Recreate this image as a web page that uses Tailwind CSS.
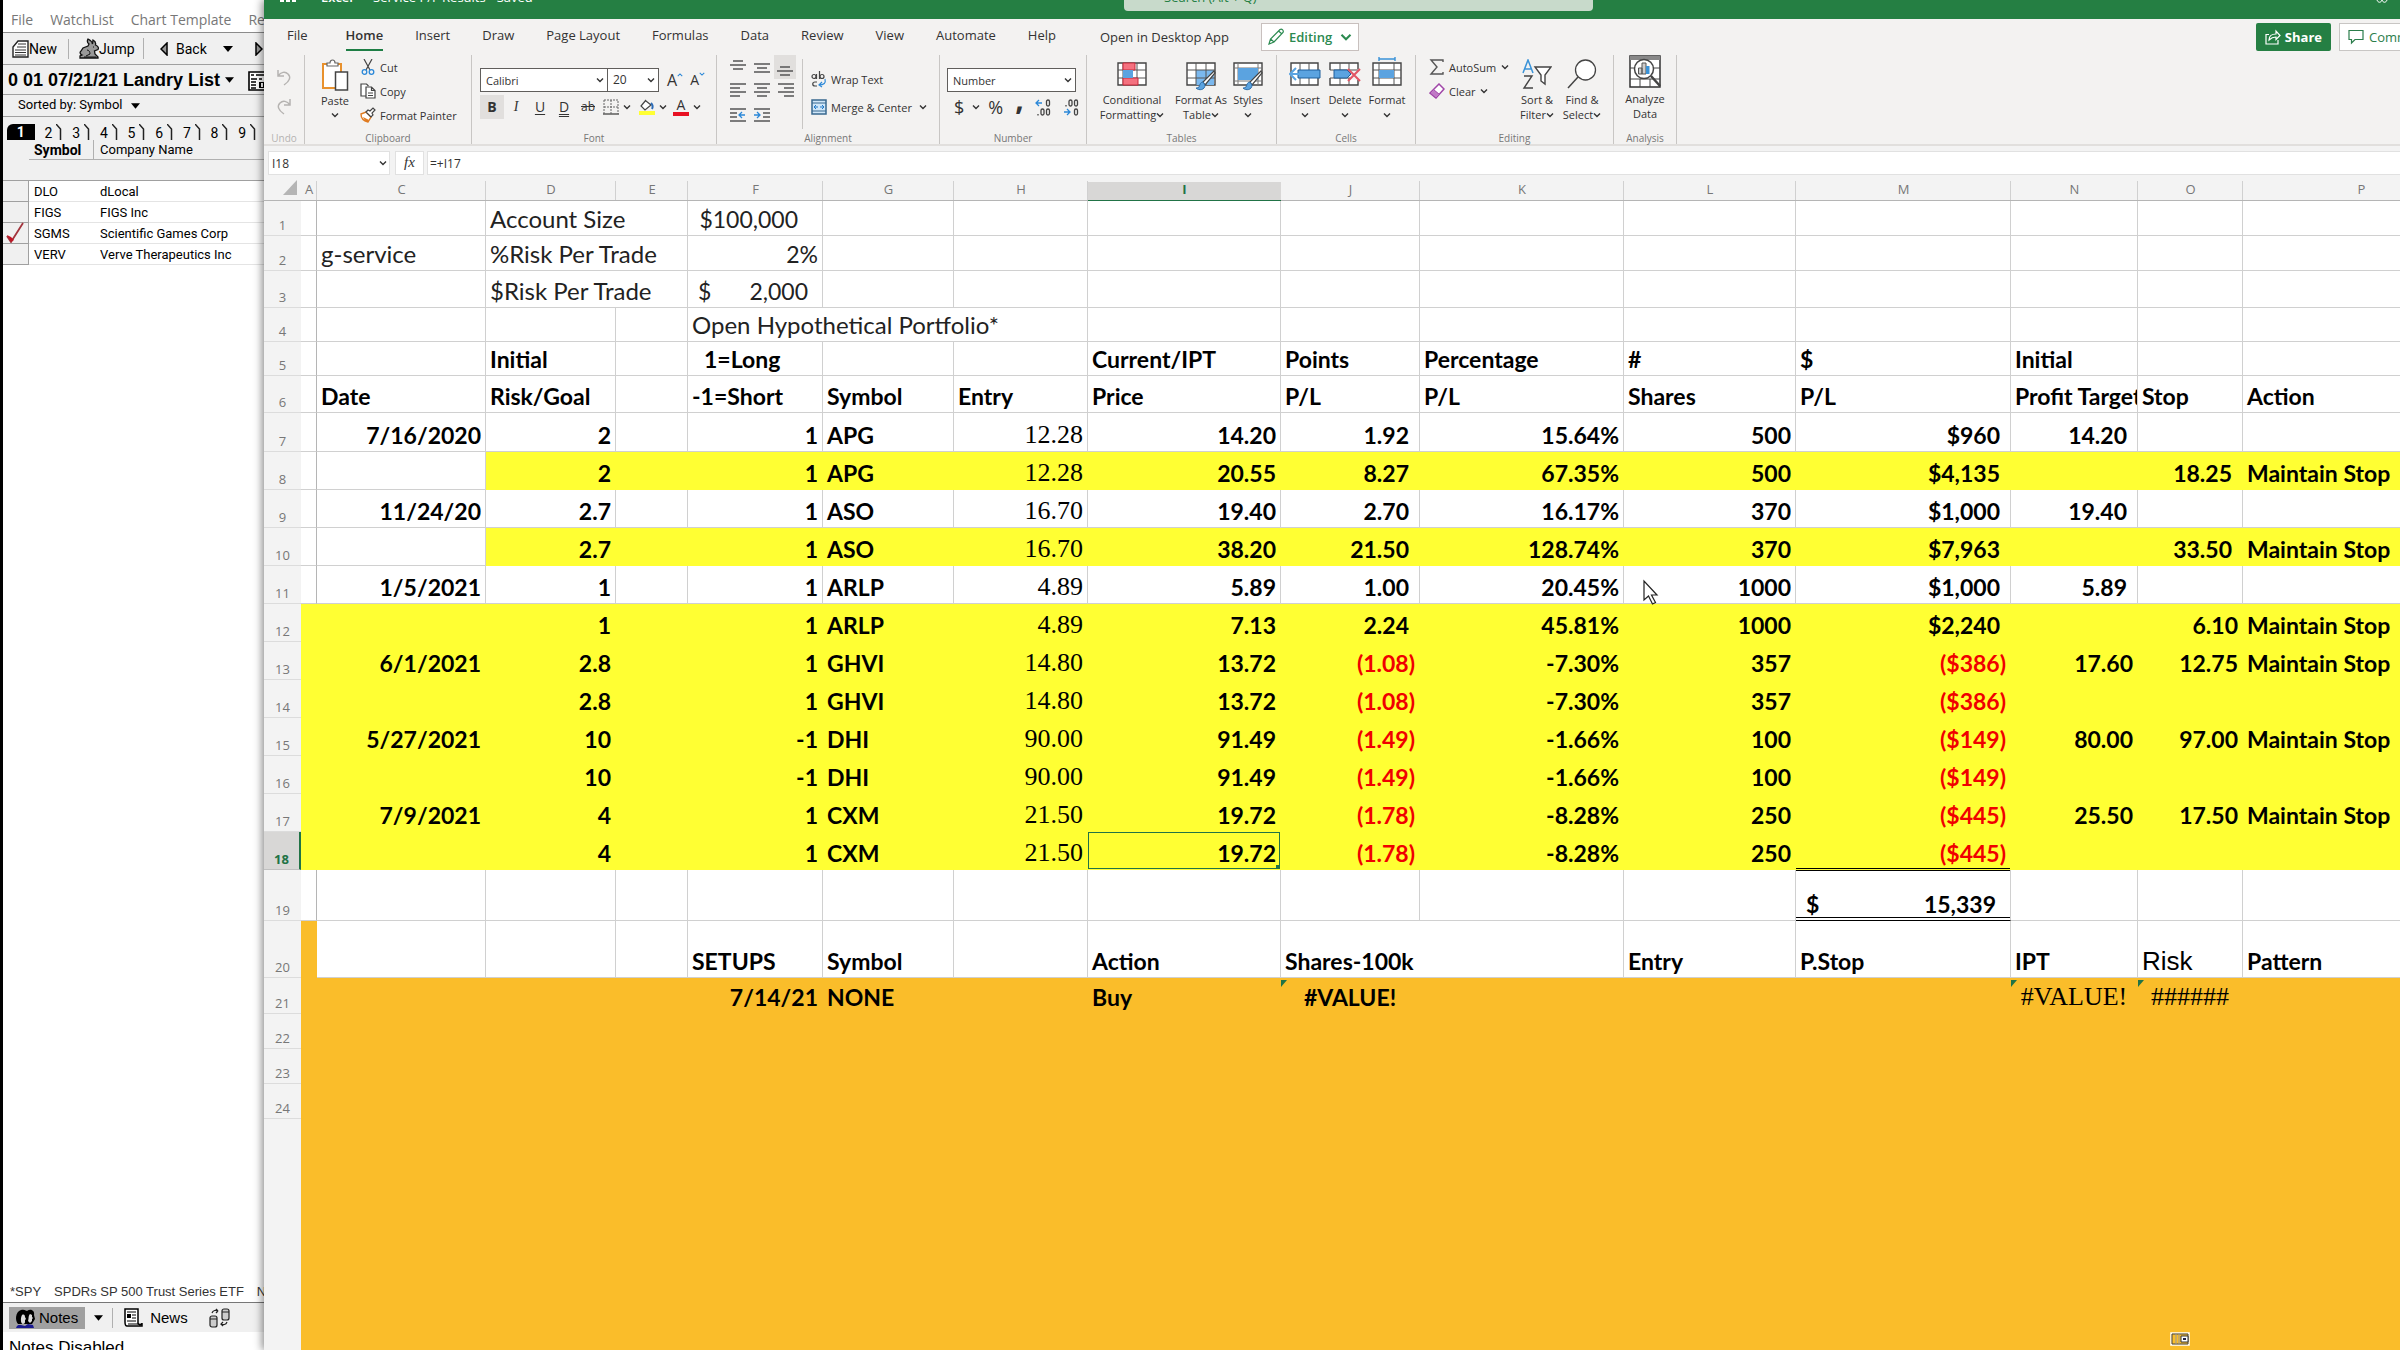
<!DOCTYPE html>
<html lang="en">
<head>
    <meta charset="UTF-8">
    <meta name="viewport" content="width=device-width, initial-scale=1.0">
    <title>Service P/F Results - Excel</title>
    <script src="https://cdn.jsdelivr.net/npm/@tailwindcss/browser@4"></script>
</head>
<body class="flex h-screen overflow-hidden bg-white font-['Open_Sans',sans-serif]">
    <!-- Shared icons -->
    <svg class="hidden">
        <symbol id="chev" viewBox="0 0 8 8"><path d="M1 2.5 4 5.5 7 2.5" fill="none" stroke="currentColor" stroke-width="1.4"/></symbol>
        <symbol id="tri" viewBox="0 0 10 6"><path d="M0 0h10L5 6z" fill="currentColor"/></symbol>
        <symbol id="brush" viewBox="0 0 22 22"><path d="M20 2 9 13l2 3L21 4z" fill="#fff" stroke="#444" stroke-width="1.2"/><path d="M9 13c-3 0-3 3-4 5-1 1-3 1-3 1 3 3 9 2 9-3z" fill="#5ba3e0" stroke="#2f6fab"/></symbol>
    </svg>

    <!-- Watch list -->
    <aside class="flex w-[264px] flex-none flex-col overflow-hidden whitespace-nowrap border-l-[3px] border-black bg-white font-['Roboto',sans-serif] text-sm text-black">
        <nav class="flex h-[33px] items-center gap-[17px] border-b border-[#8c8c8c] pt-2 pl-2 font-['Open_Sans',sans-serif] text-sm leading-5 text-[#777]">
            <a href="#">File</a>
            <a href="#">WatchList</a>
            <a href="#">Chart Template</a>
            <a href="#">Reports</a>
        </nav>
        <div class="flex h-8 items-center border-b border-[#a0a0a0] bg-[#f0f0f0]">
            <button class="flex w-[66px] items-center border-r border-[#b0b0b0] pl-[9px]">
                <svg class="h-[18px] w-[17px]" viewBox="0 0 17 18"><path d="M6 1h10v16H1V7z" fill="#fff" stroke="#222" stroke-width="1.4"/><path d="M6 4h8M5 7h9M3 10h11M3 12.500h11M3 15h11" stroke="#333"/></svg>
                New
            </button>
            <button class="flex w-[75px] items-center border-r border-[#b0b0b0] pl-[10px]">
                <svg class="h-[21px] w-5" viewBox="0 0 20 21"><path d="M9 1c2 1 4 3 4.500 5L14 2c2 1 3 3 2.500 5 2.500 1 3.500 3 2.500 4.500L15.500 13l.5 3 3 3v1H1v-2l2-1c-2-1-2.500-3-1-4l2-3 5-2 1-2C8.500 5 8 3 9 1z" fill="#999" stroke="#111" stroke-width="1.300"/><path d="M8 12c2 0 3 2 3 4l-4 2M14 9h1M5 19h12" stroke="#111" fill="none"/></svg>
                Jump
            </button>
            <button class="flex items-center gap-2 pl-4">
                <svg class="h-[14px] w-2" viewBox="0 0 8 14"><path d="M7 1v12L1 7z" fill="#999" stroke="#000" stroke-width="1.500"/></svg>
                Back
                <svg class="ml-2 h-[6px] w-[10px]"><use href="#tri"/></svg>
            </button>
            <button class="pl-[22px]" aria-label="Forward">
                <svg class="h-[14px] w-2" viewBox="0 0 8 14"><path d="M1 1v12l6-6z" fill="#999" stroke="#000" stroke-width="1.500"/></svg>
            </button>
        </div>
        <div class="flex h-[30px] items-center border-b border-[#a0a0a0] bg-[#f0f0f0] pt-[2px] pl-[5px] font-['Liberation_Sans',sans-serif] text-[18px] font-bold">
            <button class="flex items-center gap-[5px]">0 01 07/21/21 Landry List <svg class="h-[6px] w-[9px]"><use href="#tri"/></svg></button>
            <svg class="ml-[14px] h-5 w-6 flex-none" viewBox="0 0 24 20"><path d="M1 1h26v18H1z" fill="#fff" stroke="#000" stroke-width="1.600"/><path d="M3 4h3M8 4h16M3 8h6M3 11h5M3 14h5M3 17h5M11 8h3M17 8h6" stroke="#000" stroke-width="1.500"/><path d="M11 11h8v6h-8z"/><path d="M13 12h2v4h-2z" fill="#fff"/></svg>
        </div>
        <button class="flex h-[22px] items-center gap-[9px] border-b border-[#a0a0a0] bg-[#f0f0f0] pl-[15px] text-[13px]">Sorted by: Symbol <svg class="h-[6px] w-[9px]"><use href="#tri"/></svg></button>
        <div class="flex h-[23px] items-end bg-[#f0f0f0] pr-[8px] pl-1" id="pages"></div>
        <table class="w-full table-fixed border-separate border-spacing-0 text-left text-[13px] leading-[18px]">
            <colgroup><col class="w-[26px]"><col class="w-[65px]"><col></colgroup>
            <thead class="bg-[#f0f0f0]">
                <tr>
                    <td></td>
                    <th class="border-r border-b border-[#b0b0b0] pt-px pl-[5px] text-sm leading-[18px] font-bold">Symbol</th>
                    <th class="border-b border-[#b0b0b0] pt-px pl-[6px] font-normal">Company Name</th>
                </tr>
                <tr><td colspan="3" class="h-[21px] border-b border-[#a0a0a0]"></td></tr>
            </thead>
            <tbody id="watch"></tbody>
        </table>

        <div class="mt-auto flex gap-[13px] pb-[1px] pl-[7px] font-['Liberation_Sans',sans-serif] text-[13px] leading-[18px] text-[#333]">
            <span>*SPY</span><span>SPDRs SP 500 Trust Series ETF</span><span>None</span>
        </div>
        <div class="flex h-[30px] items-center border-t border-[#777] bg-[#f0f0f0] pl-[6px] font-['Liberation_Sans',sans-serif] text-[15px]">
            <button class="flex h-[22px] items-center gap-1 bg-[#a0a0a0] pr-[7px] pl-[6px]">
                <svg class="h-5 w-5" viewBox="0 0 20 20"><path d="M3 16c-3-3-3-12 3-14 4-1 5 1 6 1 4-3 8 0 7 4l1 4-3 5H4z"/><path d="M7 7c2-1 3 0 3 2l1 2-1 1v2c0 1-1 2-2 2-2 0-3-5-1-9zM15 6l2 1v2l1 1-1 1v2l-2 2-2-2c1-2 0-5 2-7z" fill="#ddd"/><path d="M1 20c1-4 4-3 5-3l4 1 3-2 5 1 1 3z" fill="#1a1a90"/></svg>
                Notes
            </button>
            <button class="px-[9px]" aria-label="Notes menu"><svg class="h-[6px] w-[9px]"><use href="#tri"/></svg></button>
            <button class="flex h-5 items-center gap-[7px] border-l border-[#b0b0b0] pl-[11px]">
                <svg class="h-[19px] w-[19px]" viewBox="0 0 19 19"><path d="M1 1h13v14c0 2 4 2 4 0v3H3c-2 0-2-3-2-4z" fill="#fff" stroke="#000" stroke-width="1.500"/><path d="M3 4h9M8 7h4M8 10h4M3 13h9M4 16h10" stroke="#000"/><path d="M3 6h4v4H3z"/></svg>
                News
            </button>
            <svg class="ml-[21px] h-5 w-[22px]" viewBox="0 0 22 20" fill="#ccc" stroke="#222" stroke-width="1.200"><rect x="13" y="1" width="7" height="11" rx="2"/><rect x="1" y="8" width="7" height="11" rx="2"/><path d="M13 4h7M1 11h7M3 5c1-3 4-3 6-2l-2-2m2 2L7 5M18 14c-1 3-4 3-6 2l2-2m-2 2 2 2" fill="none"/></svg>
        </div>
        <div class="h-[18px] pt-1 pl-[6px] font-['Liberation_Sans',sans-serif] text-[17px] leading-6">Notes Disabled</div>
    </aside>

    <!-- Excel window -->
    <main class="relative flex min-w-0 flex-1 flex-col bg-[#f3f2f1] text-[#333] shadow-[-2px_0_8px_rgba(0,0,0,0.45)]">
        <header class="relative flex h-[19px] flex-none gap-5 overflow-hidden bg-[#257f43] pl-4 text-[13px] leading-4 text-white">
            <svg class="h-[2px] w-[17px]" viewBox="0 0 17 2" fill="#fff"><path d="M0 0h4v2H0zM6 0h4v2H6zM12 0h4v2h-4z"/></svg>
            <span class="-mt-[11px] ml-1 font-semibold">Excel</span>
            <span class="-mt-[11px]">Service P/F Results - Saved</span>
            <label class="absolute top-0 left-1/2 -ml-[208px] flex h-[11px] w-[469px] items-start overflow-hidden rounded-b-sm bg-[#c8dacb] pl-10 text-[#257f43]">
                <span class="-mt-[11px]">Search (Alt + Q)</span>
                <input type="text" class="w-0" aria-label="Search">
            </label>
            <svg class="mr-3 ml-auto h-[3px] w-3" viewBox="0 0 12 3"><path d="M1 0c1 3 4 3 5 0 1 3 4 3 5 0" fill="none" stroke="#fff"/></svg>
        </header>

        <nav class="flex h-[33px] flex-none items-center pb-[2px] pl-[7px] text-[13px] leading-5 whitespace-nowrap">
            <a href="#" class="mr-[22px] px-4">File</a>
            <a href="#" class="relative flex h-8 items-center font-semibold">Home<span class="absolute inset-x-0 bottom-0 h-[2px] bg-[#1e7e45]"></span></a>
            <a href="#" class="ml-4 px-4">Insert</a>
            <a href="#" class="px-4">Draw</a>
            <a href="#" class="px-4">Page Layout</a>
            <a href="#" class="px-4">Formulas</a>
            <a href="#" class="px-4">Data</a>
            <a href="#" class="px-4">Review</a>
            <a href="#" class="px-4">View</a>
            <a href="#" class="px-4">Automate</a>
            <a href="#" class="px-4">Help</a>
            <a href="#" class="ml-7 pt-1">Open in Desktop App</a>
            <button class="mt-1 ml-8 flex h-7 items-center gap-1 border border-[#c8c0be] bg-white px-[6px] font-semibold text-[#2b8a50]">
                <svg class="h-[17px] w-[17px]" viewBox="0 0 17 17" fill="none" stroke="currentColor" stroke-width="1.200"><path d="M1 16l1.500-5L12 1.500c2-1 4 1 3 3L6 14zM2.500 11 6 14M10.500 3l3.500 3"/></svg>
                Editing
                <svg class="ml-1 h-3 w-3"><use href="#chev"/></svg>
            </button>
            <button class="mt-1 mr-2 ml-auto flex h-7 items-center gap-1 rounded-xs bg-[#257f43] px-[9px] font-bold text-white">
                <svg class="h-4 w-4" viewBox="0 0 16 16" fill="none" stroke="currentColor" stroke-width="1.200"><path d="M4 5.500H1V15h12v-4M4 11c0-4 3-6 7-6V2l4 4.500-4 4V8C8 8 6 9 4 11z"/></svg>
                Share
            </button>
            <button class="mt-1 flex h-7 w-[61px] items-center gap-[5px] overflow-hidden border border-r-0 border-[#c8c6c4] bg-white pl-2 text-[#2b7d4b]">
                <svg class="h-4 w-4 flex-none" viewBox="0 0 16 16" fill="none" stroke="currentColor" stroke-width="1.200"><path d="M1 1.500h14v9H7L3.500 14v-3.500H1z"/></svg>
                Comments
            </button>
        </nav>

        <!-- Ribbon -->
        <div class="flex h-[94px] flex-none border-b-2 border-[#e1dfdd] pt-[3px] text-[11px] leading-[15px] whitespace-nowrap">
            <section class="flex w-[41px] flex-none flex-col items-center border-r border-[#c8c6c4] text-[#b5b3b1]">
                <button class="mt-3 h-5" aria-label="Undo"><svg class="h-[18px] w-4" viewBox="0 0 16 18" fill="none" stroke="currentColor" stroke-width="1.500"><path d="M2 2v6h6M2 8c3-4 7-5 10-2s2 7-4 11"/></svg></button>
                <button class="mt-[9px] h-5" aria-label="Redo"><svg class="h-[18px] w-4" viewBox="0 0 16 18" fill="none" stroke="currentColor" stroke-width="1.500"><path d="M14 2v6H8M14 8c-3-4-7-5-10-2s-2 7 4 11"/></svg></button>
                <h2 class="mt-auto text-[10px] leading-[11px]">Undo</h2>
            </section>

            <section class="flex w-[167px] flex-none flex-col border-r border-[#c8c6c4]">
                <div class="flex items-start gap-[11px] pl-4">
                    <button class="flex w-[28px] flex-col items-center pt-1">
                        <svg class="h-8 w-7" viewBox="0 0 28 32"><path d="M2 5h18v24H2z" fill="#fff" stroke="#e8912d" stroke-width="2"/><path d="M6 7V4h3c0-4 5-4 5 0h3v3z" fill="#fff" stroke="#666" stroke-width="1.200"/><path d="M14.500 13h12v18h-12z" fill="#fff" stroke="#444" stroke-width="1.500"/></svg>
                        <span class="mt-[2px]">Paste</span>
                        <svg class="mt-[3px] h-2 w-2"><use href="#chev"/></svg>
                    </button>
                    <div class="flex flex-col gap-2 pt-1">
                        <button class="flex h-4 items-center gap-1"><svg class="h-4 w-4" viewBox="0 0 16 16" fill="none"><path d="M4 0l6 11M12 0 6 11" stroke="#444" stroke-width="1.200"/><circle cx="4.500" cy="13" r="2.300" stroke="#2b88d8" stroke-width="1.300"/><circle cx="11.500" cy="13" r="2.300" stroke="#2b88d8" stroke-width="1.300"/></svg>Cut</button>
                        <button class="flex h-4 items-center gap-1"><svg class="h-4 w-4" viewBox="0 0 16 16" fill="#fff" stroke="#444" stroke-width="1.200"><path d="M7 13H1V1h5.500l2 2"/><path d="M6 4h5.500L15 7.500V15H6zM11.500 4v3.500H15M8 10h5M8 12.500h5"/></svg>Copy</button>
                        <button class="flex h-4 items-center gap-1"><svg class="h-4 w-4" viewBox="0 0 16 16"><path d="M1 7l5-2 5 5-3 5C4 14 1 11 1 7z" fill="#fff" stroke="#e07b20" stroke-width="1.400"/><path d="M3 10l6 3-1 2c-2 0-4-2-5-5z" fill="#e07b20"/><path d="M6 5l2-2 2 1 3-3 2 2-3 3 1 2-2 2z" fill="#fff" stroke="#444" stroke-width="1.200"/></svg>Format Painter</button>
                    </div>
                </div>
                <h2 class="mt-auto text-center text-[10px] leading-[11px] text-[#777]">Clipboard</h2>
            </section>

            <section class="flex w-[245px] flex-none flex-col border-r border-[#c8c6c4]">
                <div class="mt-[13px] flex items-center pl-2">
                    <select class="h-6 w-[128px] appearance-none border border-[#605e5c] bg-white pl-[5px]" aria-label="Font"><option>Calibri</option></select>
                    <svg class="-ml-3 h-2 w-2"><use href="#chev"/></svg>
                    <select class="ml-[3px] h-6 w-[52px] appearance-none border border-[#605e5c] bg-white pl-[5px] text-xs" aria-label="Font size"><option>20</option></select>
                    <svg class="-ml-3 h-2 w-2"><use href="#chev"/></svg>
                    <button class="ml-3 flex text-base leading-5" aria-label="Increase font size">A<svg class="mt-[2px] h-[6px] w-[6px] rotate-180 text-[#2b88d8]"><use href="#chev"/></svg></button>
                    <button class="ml-[7px] flex text-sm leading-5" aria-label="Decrease font size">A<svg class="mt-[1px] h-[6px] w-[6px] text-[#2b88d8]"><use href="#chev"/></svg></button>
                </div>
                <div class="mt-[3px] flex h-6 items-center pl-2 text-sm">
                    <button class="h-6 w-6 bg-[#e1dfdd] font-bold">B</button>
                    <button class="w-6 font-['Liberation_Serif',serif] italic">I</button>
                    <button class="w-6 underline underline-offset-2">U</button>
                    <button class="w-6 underline decoration-double underline-offset-2">D</button>
                    <button class="w-6 text-xs line-through">ab</button>
                    <button class="flex items-center gap-1" aria-label="Borders"><svg class="ml-[3px] h-4 w-4" viewBox="0 0 16 16" fill="none" stroke="#666"><path d="M1 1h14v14M1 1v14M8 1v14M1 8h14" stroke-dasharray="2 1"/><path d="M0 15h16" stroke-width="1.600"/></svg><svg class="h-2 w-2"><use href="#chev"/></svg></button>
                    <button class="ml-2 flex items-center gap-1" aria-label="Fill color"><svg class="h-4 w-4" viewBox="0 0 16 16"><path d="M7 1 2 7l4 4 6-5-5-4" fill="#fff" stroke="#444" stroke-width="1.200"/><path d="M12 4c2 2 2 4 1 6" stroke="#2b6cb8" stroke-width="2" fill="none"/><path d="M0 12h16v4H0z" fill="#ff3"/></svg><svg class="h-2 w-2"><use href="#chev"/></svg></button>
                    <button class="ml-[6px] flex items-center gap-1" aria-label="Font color"><span class="flex h-[18px] w-4 items-center justify-center border-b-4 border-[#e81123] text-sm leading-4">A</span><svg class="h-2 w-2"><use href="#chev"/></svg></button>
                </div>
                <h2 class="mt-auto text-center text-[10px] leading-[11px] text-[#777]">Font</h2>
            </section>

            <section class="flex w-[223px] flex-none flex-col border-r border-[#c8c6c4]">
                <div class="flex">
                    <div class="grid grid-cols-3 pl-[9px]" id="aligns"></div>
                    <div class="mt-1 ml-[4px] flex h-[70px] flex-col gap-3 border-l border-[#c8c6c4] pt-3 pl-2">
                        <button class="flex h-4 items-center gap-1"><svg class="h-[17px] w-4" viewBox="0 0 16 17" fill="none" stroke="#444" stroke-width="1.200"><circle cx="3" cy="5.500" r="2"/><path d="M5.500 3v5M8.500 0v8"/><circle cx="11" cy="5.500" r="2"/><path d="M6 11H4c-3 0-3 4 0 4h2"/><path d="M14 8c1 4-1 6-6 6m3-3-3 3 3 2" stroke="#2b88d8"/></svg>Wrap Text</button>
                        <button class="flex h-4 items-center gap-1"><svg class="h-4 w-4" viewBox="0 0 16 16" fill="none"><path d="M1 1h14v14H1z" fill="#cfe6f8" stroke="#39688f" stroke-width="1.500"/><path d="M1 4h14M1 12h14" stroke="#39688f"/><path d="M3 8h4M5 6 3 8l2 2M13 8H9m2-2 2 2-2 2" stroke="#1f78c8"/></svg>Merge &amp; Center <svg class="ml-[3px] h-2 w-2"><use href="#chev"/></svg></button>
                    </div>
                </div>
                <h2 class="mt-auto text-center text-[10px] leading-[11px] text-[#777]">Alignment</h2>
            </section>

            <section class="flex w-[147px] flex-none flex-col border-r border-[#c8c6c4]">
                <div class="mt-[13px] flex items-center pl-[7px]">
                    <select class="h-6 w-[129px] appearance-none border border-[#605e5c] bg-white pl-[5px]" aria-label="Number format"><option>Number</option></select>
                    <svg class="-ml-3 h-2 w-2"><use href="#chev"/></svg>
                </div>
                <div class="mt-[3px] flex h-6 items-center gap-3 pl-[14px] text-lg">
                    <button class="flex items-center gap-2" aria-label="Currency">$<svg class="h-2 w-2"><use href="#chev"/></svg></button>
                    <button class="-ml-1">%</button>
                    <button class="w-2 pb-4 text-3xl leading-6 font-bold">,</button>
                    <button aria-label="Increase decimal"><svg class="h-[17px] w-4" viewBox="0 0 16 17" fill="none" stroke="#444" stroke-width="1.300"><path d="M7 4H1m3-3L1 4l3 3" stroke="#2b88d8"/><rect x="11.500" y="1" width="3" height="6" rx="1.500"/><rect x="6" y="10" width="3" height="6" rx="1.500"/><rect x="11.500" y="10" width="3" height="6" rx="1.500"/><path d="M3 15v1.500"/></svg></button>
                    <button aria-label="Decrease decimal"><svg class="h-[17px] w-4" viewBox="0 0 16 17" fill="none" stroke="#444" stroke-width="1.300"><path d="M1 13h6m-3-3 3 3-3 3" stroke="#2b88d8"/><rect x="6" y="1" width="3" height="6" rx="1.500"/><rect x="11.500" y="1" width="3" height="6" rx="1.500"/><rect x="11.500" y="10" width="3" height="6" rx="1.500"/><path d="M3 6v1.500"/></svg></button>
                </div>
                <h2 class="mt-auto text-center text-[10px] leading-[11px] text-[#777]">Number</h2>
            </section>

            <section class="flex w-[190px] flex-none flex-col border-r border-[#c8c6c4]">
                <div class="flex gap-[9px] pt-[7px] pl-[12px]">
                    <button class="flex w-[66px] flex-col items-center">
                        <svg class="mb-[6px] h-6 w-[30px]" viewBox="0 0 30 24"><path d="M1 1h28v22H1z" fill="#fff" stroke="#444" stroke-width="1.400"/><path d="M1 8h28M1 16h28M6 1v22M20 1v22" stroke="#555"/><path d="M6 1h12v7H6zM6 16h15v7H6z" fill="#f4717f" stroke="#c8283a"/><path d="M6 8h10v8H6z" fill="#5ba3e0"/></svg>
                        Conditional
                        <span class="flex items-center">Formatting<svg class="h-2 w-2"><use href="#chev"/></svg></span>
                    </button>
                    <button class="flex w-[54px] flex-col items-center">
                        <svg class="mb-[6px] h-6 w-[30px] overflow-visible" viewBox="0 0 30 24"><path d="M1 1h28v22H1z" fill="#fff" stroke="#444" stroke-width="1.400"/><path d="M10 8h18v15H10z" fill="#7ab8ee"/><path d="M1 8h28M1 16h28M10 1v22M20 1v22" stroke="#555"/><use href="#brush" x="8" y="7" width="22" height="22"/></svg>
                        Format As
                        <span class="flex items-center">Table<svg class="h-2 w-2"><use href="#chev"/></svg></span>
                    </button>
                    <button class="-ml-[4px] flex w-[30px] flex-col items-center">
                        <svg class="mb-[6px] h-6 w-[30px] overflow-visible" viewBox="0 0 30 24"><path d="M1 1h28v22H1z" fill="#fff" stroke="#444" stroke-width="1.400"/><path d="M1 6h28M1 19h28M5 1v22M25 1v22" stroke="#777"/><path d="M5 6h20v12H5z" fill="#5ba3e0"/><use href="#brush" x="8" y="7" width="22" height="22"/></svg>
                        Styles
                        <svg class="mt-1 h-2 w-2"><use href="#chev"/></svg>
                    </button>
                </div>
                <h2 class="mt-auto text-center text-[10px] leading-[11px] text-[#777]">Tables</h2>
            </section>

            <section class="flex w-[139px] flex-none flex-col border-r border-[#c8c6c4]">
                <div class="flex gap-[6px] pt-[7px] pl-[11px]">
                    <button class="flex w-[34px] flex-col items-center">
                        <svg class="mb-[6px] h-6 w-8" viewBox="0 0 32 24"><path d="M2 1h27v22H2z" fill="#fff" stroke="#444" stroke-width="1.400"/><path d="M11 1v22M20 1v22" stroke="#555"/><path d="M9 8h22v8H9z" fill="#5ba3e0" stroke="#1f5f9b"/><path d="M14 12H1m6-6-6 6 6 6" fill="none" stroke="#5ba3e0" stroke-width="2"/></svg>
                        Insert
                        <svg class="mt-1 h-2 w-2"><use href="#chev"/></svg>
                    </button>
                    <button class="flex w-[34px] flex-col items-center">
                        <svg class="mb-[6px] h-6 w-8" viewBox="0 0 32 24"><path d="M1 8V1h28v6M1 16v7h28v-5" fill="#fff" stroke="#444" stroke-width="1.400"/><path d="M1 8h28M1 16h20M11 1v7M20 1v7M11 16v7M20 16v7" stroke="#555"/><path d="M5 8h13l4 4-4 4H5z" fill="#5ba3e0" stroke="#1f5f9b"/><path d="M19 7l12 12M31 7 19 19" stroke="#e25563" stroke-width="2"/></svg>
                        Delete
                        <svg class="mt-1 h-2 w-2"><use href="#chev"/></svg>
                    </button>
                    <button class="flex w-[38px] flex-col items-center">
                        <svg class="mb-[6px] h-6 w-[30px] overflow-visible" viewBox="0 0 30 24"><path d="M7-3h16M7-5v4M23-5v4" stroke="#3a93d8" stroke-width="1.400"/><path d="M1 1h28v22H1z" fill="#fff" stroke="#444" stroke-width="1.400"/><path d="M1 8h28M1 16h28M7 1v22M22 1v22" stroke="#555"/><path d="M7 8h15v8H7z" fill="#5ba3e0"/></svg>
                        Format
                        <svg class="mt-1 h-2 w-2"><use href="#chev"/></svg>
                    </button>
                </div>
                <h2 class="mt-auto text-center text-[10px] leading-[11px] text-[#777]">Cells</h2>
            </section>

            <section class="flex w-[198px] flex-none flex-col border-r border-[#c8c6c4]">
                <div class="flex items-start pl-[13px]">
                    <div class="flex w-[84px] flex-col gap-2 pt-1">
                        <button class="flex h-4 items-center gap-1"><svg class="h-4 w-4" viewBox="0 0 16 16"><path d="M14 3V1H2l6 7-6 7h12v-2" fill="none" stroke="#555" stroke-width="1.400"/></svg>AutoSum <svg class="ml-[1px] h-2 w-2"><use href="#chev"/></svg></button>
                        <button class="flex h-4 items-center gap-1"><svg class="h-4 w-4" viewBox="0 0 16 16"><path d="M10 1l5 5-8 9-6-5z" fill="#fff" stroke="#a046a8" stroke-width="1.500"/><path d="M4.500 6.500l6 5L7 15l-6-5z" fill="#c07ac6" stroke="#a046a8"/></svg>Clear <svg class="h-2 w-2"><use href="#chev"/></svg></button>
                    </div>
                    <button class="flex w-[48px] flex-col items-center pt-1">
                        <svg class="mb-[3px] h-[30px] w-[30px]" viewBox="0 0 30 30" fill="none"><path d="M1 14 6 1l5 13M3 10h6" stroke="#3a93d8" stroke-width="1.500"/><path d="M2 17h8L2 29h9" stroke="#444" stroke-width="1.400"/><path d="M13 8h16l-6 8v9l-4-3v-6z" fill="#fff" stroke="#444" stroke-width="1.400"/></svg>
                        Sort &amp;
                        <span class="flex items-center">Filter<svg class="h-2 w-2"><use href="#chev"/></svg></span>
                    </button>
                    <button class="flex w-[42px] flex-col items-center pt-1">
                        <svg class="mb-[3px] h-[30px] w-[30px]" viewBox="0 0 30 30"><circle cx="18.500" cy="11" r="10" fill="#fff" stroke="#444" stroke-width="1.300"/><path d="M11 18 1 29" stroke="#444" stroke-width="1.500"/></svg>
                        Find &amp;
                        <span class="flex items-center">Select<svg class="h-2 w-2"><use href="#chev"/></svg></span>
                    </button>
                </div>
                <h2 class="mt-auto text-center text-[10px] leading-[11px] text-[#777]">Editing</h2>
            </section>

            <section class="flex w-[63px] flex-none flex-col items-center border-r border-[#c8c6c4]">
                <button class="flex flex-col items-center leading-[15px]">
                    <svg class="mb-[3px] h-[33px] w-8" viewBox="0 0 32 33"><path d="M1 1h30v31H1z" fill="#fff" stroke="#333" stroke-width="1.500"/><path d="M1 1h30v4H1z" fill="#888"/><path d="M1 13h30M1 24h30M11 24v8M21 24v8" stroke="#444"/><circle cx="15" cy="14" r="9.500" fill="#fff" stroke="#444" stroke-width="1.500"/><path d="M22 21l9 10" stroke="#444" stroke-width="2.500"/><path d="M9.500 13h3.500v6H9.500zM13 8h4v11h-4z" fill="#ccc" stroke="#555"/><path d="M17 11h3.500v8H17z" fill="#3a93d8"/></svg>
                    Analyze
                    <span>Data</span>
                </button>
                <h2 class="mt-auto text-[10px] leading-[11px] text-[#777]">Analysis</h2>
            </section>
        </div>

        <!-- Formula bar -->
        <div class="flex h-[29px] flex-none items-end gap-[5px] bg-[#f3f3f3] pl-1 text-xs">
            <div class="flex w-[122px] items-center border border-[#e1e1e1] bg-white pr-[2px]">
                <input type="text" value="I18" aria-label="Name box" class="h-[22px] w-full px-[3px]">
                <svg class="h-2 w-2 flex-none"><use href="#chev"/></svg>
            </div>
            <button class="h-6 w-[29px] border border-[#e1e1e1] bg-white font-['Liberation_Serif',serif] text-[15px] italic">fx</button>
            <input type="text" value="=+I17" aria-label="Formula" class="-ml-[2px] h-6 min-w-0 flex-1 border border-r-0 border-[#e1e1e1] bg-white px-[2px]">
        </div>

        <!-- Sheet -->
        <div class="relative flex-1 overflow-hidden bg-[#f3f3f3] bg-[linear-gradient(to_right,#f3f3f3_37px,#fabd2a_37px)]">
            <table class="w-full table-fixed border-separate border-spacing-0 font-['Lato',sans-serif] text-[23px] leading-7 whitespace-nowrap text-black">
                <colgroup>
                    <col class="w-[37px]"><col class="w-[16px]"><col class="w-[169px]"><col class="w-[130px]">
                    <col class="w-[72px]"><col class="w-[135px]"><col class="w-[131px]"><col class="w-[134px]">
                    <col class="w-[193px]"><col class="w-[139px]"><col class="w-[204px]"><col class="w-[172px]">
                    <col class="w-[215px]"><col class="w-[127px]"><col class="w-[105px]"><col class="w-[237px]">
                </colgroup>
                <thead class="bg-[#f3f3f3]"><tr id="letters"></tr></thead>
                <tbody id="sheet"></tbody>
            </table>
        </div>

        <!-- Pointer -->
        <svg class="absolute top-[579px] left-[1378px] h-[26px] w-[18px]" viewBox="0 0 18 26"><path d="M2 2v19l4.500-4 4 8 3-1.500-4-7.500H15z" fill="#fff" stroke="#222" stroke-width="1.200"/></svg>
        <!-- Tray icon -->
        <svg class="absolute right-[210px] bottom-[4px] h-[14px] w-5" viewBox="0 0 20 14"><path d="M1 1h18v12H1z" fill="#fabd2a" stroke="#fff" stroke-width="1.500"/><path d="M2 2h16v10H2z" fill="none" stroke="#444"/><path d="M6 2v10M9 2v10" stroke="#999"/><path d="M11 4h7v6h-7z" fill="#fff" stroke="#333"/><path d="M13 6h3v2h-3z" fill="#224"/></svg>
    </main>

    <script>
        // Page tabs
        const pages = document.getElementById("pages");
        for (let i = 1; i <= 9; i++) {
            const button = document.createElement("button");
            button.className = i === 1
                ? "h-4 flex-1 rounded-tl-md bg-black text-center leading-4 font-bold text-white"
                : "relative h-4 flex-1 text-center leading-[18px]";
            button.innerHTML = i + (i === 1 ? "" : '<svg class="absolute top-0 right-0 h-4 w-[6px]" viewBox="0 0 6 16"><path d="M0 0l4.500 5v11" fill="none" stroke="#222" stroke-width="1.500"/></svg>');
            pages.appendChild(button);
        }

        // Watch list rows
        const stocks = [["DLO", "dLocal"], ["FIGS", "FIGS Inc"], ["SGMS", "Scientific Games Corp"], ["VERV", "Verve Therapeutics Inc"]];
        document.getElementById("watch").innerHTML = stocks.map(([symbol, name]) => `<tr>
            <td class="relative h-[21px] border-r border-b border-[#a0a0a0] bg-[#f0f0f0]">${symbol === "SGMS" ? '<svg class="absolute -top-px left-[3px] h-[21px] w-[19px]" viewBox="0 0 19 21"><path d="M1 14l4 6L17 1" fill="none" stroke="#a3343c" stroke-width="1.800"/><path d="M1 13l4 2 3 3-3 2z" fill="#c01525"/></svg>' : ""}</td>
            <td class="border-b border-[#e4e4e4] pt-[2px] pl-[5px]">${symbol}</td>
            <td class="border-b border-[#e4e4e4] pt-[2px] pl-[6px]">${name}</td></tr>`).join("");

        // Alignment icons, one line list for each button
        const aligns = [
            "M3 2h10M0 6h16M3 10h10", "M0 5h16M3 9h10M0 13h16", "M3 8h10M0 12h16M3 16h10",
            "M0 1h16M0 5h10M0 9h16M0 13h10", "M0 1h16M3 5h10M0 9h16M3 13h10", "M0 1h16M6 5h10M0 9h16M6 13h10",
            "M0 1h16M0 5h7M0 9h7M0 13h16", "M0 1h16M9 5h7M9 9h7M0 13h16"
        ];
        document.getElementById("aligns").innerHTML = aligns.map((d, i) => `<button aria-label="Align ${i + 1}" class="${i === 2 ? "flex h-6 w-[22px] items-center justify-center bg-[#e1dfdd]" : "flex h-6 w-6 items-center justify-center"}">
            <svg class="h-[17px] w-4" viewBox="0 0 16 17"><path d="${d}" stroke="#555" stroke-width="1.500"/>${i === 6 ? '<path d="M15 7H9m3-3L9 7l3 3" fill="none" stroke="#2b88d8" stroke-width="1.300"/>' : ""}${i === 7 ? '<path d="M0 7h6M3 4l3 3-3 3" fill="none" stroke="#2b88d8" stroke-width="1.300"/>' : ""}</svg></button>`).join("");

        // Column letters (B is hidden)
        document.getElementById("letters").innerHTML = '<td class="h-[26px] border-b border-[#b5b5b5]"><svg class="mr-1 ml-auto h-[15px] w-[14px]" viewBox="0 0 14 15"><path d="M14 0v15H0z" fill="#b5b5b5"/></svg></td>' +
            "ACDEFGHIJKLMNOP".split("").map(c => c === "I"
                ? '<th class="border-b border-b-[#217346] bg-[linear-gradient(to_bottom,#f3f3f3_7px,#d8d7d6_7px)] pt-1 pb-px font-[\'Open_Sans\',sans-serif] text-[13px] leading-4 font-bold text-[#217346]">I</th>'
                : `<th class="border-b border-[#b5b5b5] bg-[linear-gradient(#d0d0d0,#d0d0d0)] bg-size-[1px_19px] bg-right-bottom bg-no-repeat pt-1 pb-px font-['Open_Sans',sans-serif] text-[13px] leading-4 font-normal text-[#777]">${c}</th>`).join("");

        const cols = "ACDEFGHIJKLMNOP";
        const rows = [
            { h: 35, D: "Account Size", F: "$100,000", span: { D: 2 } },
            { h: 35, C: "g-service", D: "%Risk Per Trade", F: "2%", span: { D: 2 } },
            { h: 37, D: "$Risk Per Trade", F: "$|2,000", span: { D: 2 } },
            { h: 34, F: "Open Hypothetical Portfolio*", span: { F: 3 } },
            { h: 34, D: "Initial", F: "1=Long", I: "Current/IPT", J: "Points", K: "Percentage", L: "#", M: "$", N: "Initial" },
            { h: 37, C: "Date", D: "Risk/Goal", F: "-1=Short", G: "Symbol", H: "Entry", I: "Price", J: "P/L", K: "P/L", L: "Shares", M: "P/L", N: "Profit Target", O: "Stop", P: "Action" },
            { h: 39, C: "7/16/2020", D: "2", F: "1", G: "APG", H: "12.28", I: "14.20", J: "1.92", K: "15.64%", L: "500", M: "$960", N: "14.20" },
            { h: 38, fill: "D", D: "2", F: "1", G: "APG", H: "12.28", I: "20.55", J: "8.27", K: "67.35%", L: "500", M: "$4,135", O: "18.25", P: "Maintain Stop" },
            { h: 38, C: "11/24/20", D: "2.7", F: "1", G: "ASO", H: "16.70", I: "19.40", J: "2.70", K: "16.17%", L: "370", M: "$1,000", N: "19.40" },
            { h: 38, fill: "D", D: "2.7", F: "1", G: "ASO", H: "16.70", I: "38.20", J: "21.50", K: "128.74%", L: "370", M: "$7,963", O: "33.50", P: "Maintain Stop" },
            { h: 38, C: "1/5/2021", D: "1", F: "1", G: "ARLP", H: "4.89", I: "5.89", J: "1.00", K: "20.45%", L: "1000", M: "$1,000", N: "5.89" },
            { h: 38, fill: "A", D: "1", F: "1", G: "ARLP", H: "4.89", I: "7.13", J: "2.24", K: "45.81%", L: "1000", M: "$2,240", O: "6.10", P: "Maintain Stop" },
            { h: 38, fill: "A", C: "6/1/2021", D: "2.8", F: "1", G: "GHVI", H: "14.80", I: "13.72", J: "(1.08)", K: "-7.30%", L: "357", M: "($386)", N: "17.60", O: "12.75", P: "Maintain Stop" },
            { h: 38, fill: "A", D: "2.8", F: "1", G: "GHVI", H: "14.80", I: "13.72", J: "(1.08)", K: "-7.30%", L: "357", M: "($386)" },
            { h: 38, fill: "A", C: "5/27/2021", D: "10", F: "-1", G: "DHI", H: "90.00", I: "91.49", J: "(1.49)", K: "-1.66%", L: "100", M: "($149)", N: "80.00", O: "97.00", P: "Maintain Stop" },
            { h: 38, fill: "A", D: "10", F: "-1", G: "DHI", H: "90.00", I: "91.49", J: "(1.49)", K: "-1.66%", L: "100", M: "($149)" },
            { h: 38, fill: "A", C: "7/9/2021", D: "4", F: "1", G: "CXM", H: "21.50", I: "19.72", J: "(1.78)", K: "-8.28%", L: "250", M: "($445)", N: "25.50", O: "17.50", P: "Maintain Stop" },
            { h: 38, fill: "A", D: "4", F: "1", G: "CXM", H: "21.50", I: "19.72", J: "(1.78)", K: "-8.28%", L: "250", M: "($445)" },
            { h: 51, M: "$|15,339" },
            { h: 57, F: "SETUPS", G: "Symbol", I: "Action", J: "Shares-100k", L: "Entry", M: "P.Stop", N: "IPT", O: "Risk", P: "Pattern", span: { J: 2 } },
            { h: 36, orange: true, F: "7/14/21", G: "NONE", I: "Buy", J: "#VALUE!", N: "#VALUE!", O: "######" },
            { h: 35, orange: true },
            { h: 35, orange: true },
            { h: 35, orange: true }
        ];

        function cellClass(row, n, col, text) {
            const list = ["relative overflow-hidden border-r border-b px-1 pb-[2px] align-bottom"];
            const yellow = row.fill && cols.indexOf(col) >= cols.indexOf(row.fill);
            const orange = row.orange || (n === 20 && col === "A");
            const serif = (n > 6 && col === "H") || (n === 21 && "NO".includes(col));
            const number = /^[-(]?\$?[\d,.\/]+[%)]?$/.test(text);
            // fill and grid lines
            if (yellow) list.push("border-[#ffff33] bg-[#ffff33]");
            else if (orange) list.push("border-[#fabd2a] bg-[#fabd2a]");
            else if (n === 19 && col === "M") list.push("border-r-[#d0d0d0] border-b-black bg-white");
            else if (col === "A") list.push("border-r-[#b5b5b5] border-b-[#d0d0d0] bg-white");
            else list.push("border-[#d0d0d0] bg-white");
            // font
            if (serif) list.push("font-['Liberation_Serif',serif] text-[26px]");
            else if (n === 20 && col === "O") list.push("font-['Liberation_Sans',sans-serif] text-[26px]");
            else if (n > 4) list.push("font-bold");
            else if (!number) list.push("text-2xl leading-7 text-[#222]");
            else list.push("text-[#222]");
            // alignment
            if (n === 21 && "JNO".includes(col)) list.push("text-center");
            else if (number) {
                list.push("text-right");
                if (text === "$100,000") list.push("pr-6");
                else if (text[0] === "(") list.push("text-[#f00000]");
                else if ((n < 12 && "JMNO".includes(col)) || (n === 12 && "JM".includes(col))) list.push("pr-[10px]");
            }
            if (text === "1=Long") list.push("pl-4");
            return list.join(" ");
        }

        document.getElementById("sheet").innerHTML = rows.map((row, r) => {
            const n = r + 1;
            let html = n === 18
                ? `<th style="height:${row.h}px" class="border-r-2 border-b border-r-[#217346] border-b-[#c0c0c0] bg-[#d8d7d6] pb-[2px] align-bottom font-['Open_Sans',sans-serif] text-[13px] leading-4 font-bold text-[#217346]">18</th>`
                : `<th style="height:${row.h}px" class="border-b border-[#dcdcdc] bg-[#f3f3f3] pb-[2px] align-bottom font-['Open_Sans',sans-serif] text-[13px] leading-4 font-normal text-[#777]">${n}</th>`;
            for (let i = 0; i < cols.length; i++) {
                const col = cols[i];
                const text = row[col] || "";
                const span = (row.span && row.span[col]) || 1;
                let body = text;
                if (text.includes("|")) {
                    const [sign, amount] = text.split("|");
                    body = `<div class="flex justify-between pr-[10px] pl-[6px] text-[23px]"><span>${sign}</span><span>${amount}</span></div>`;
                }
                // borders round the total, error corners, selection
                if (n === 19 && col === "M") body += '<span class="absolute inset-x-0 top-0 h-px bg-black"></span><span class="absolute inset-x-0 bottom-[2px] h-px bg-black"></span>';
                if (n === 18 && col === "M") body += '<span class="absolute inset-x-0 bottom-0 h-px bg-black"></span>';
                if (n === 21 && "JNO".includes(col)) body += '<svg class="absolute top-[2px] left-0 h-[7px] w-[6px]" viewBox="0 0 6 7"><path d="M0 0h6L0 7z" fill="#217346"/></svg>';
                if (n === 18 && col === "I") body += '<span class="absolute inset-0 border border-[#217346]"></span><span class="absolute right-0 bottom-0 h-1 w-1 bg-[#217346]"></span>';
                html += `<td colspan="${span}" class="${cellClass(row, n, col, text)}">${body}</td>`;
                i += span - 1;
            }
            return `<tr>${html}</tr>`;
        }).join("");
    </script>
</body>
</html>
